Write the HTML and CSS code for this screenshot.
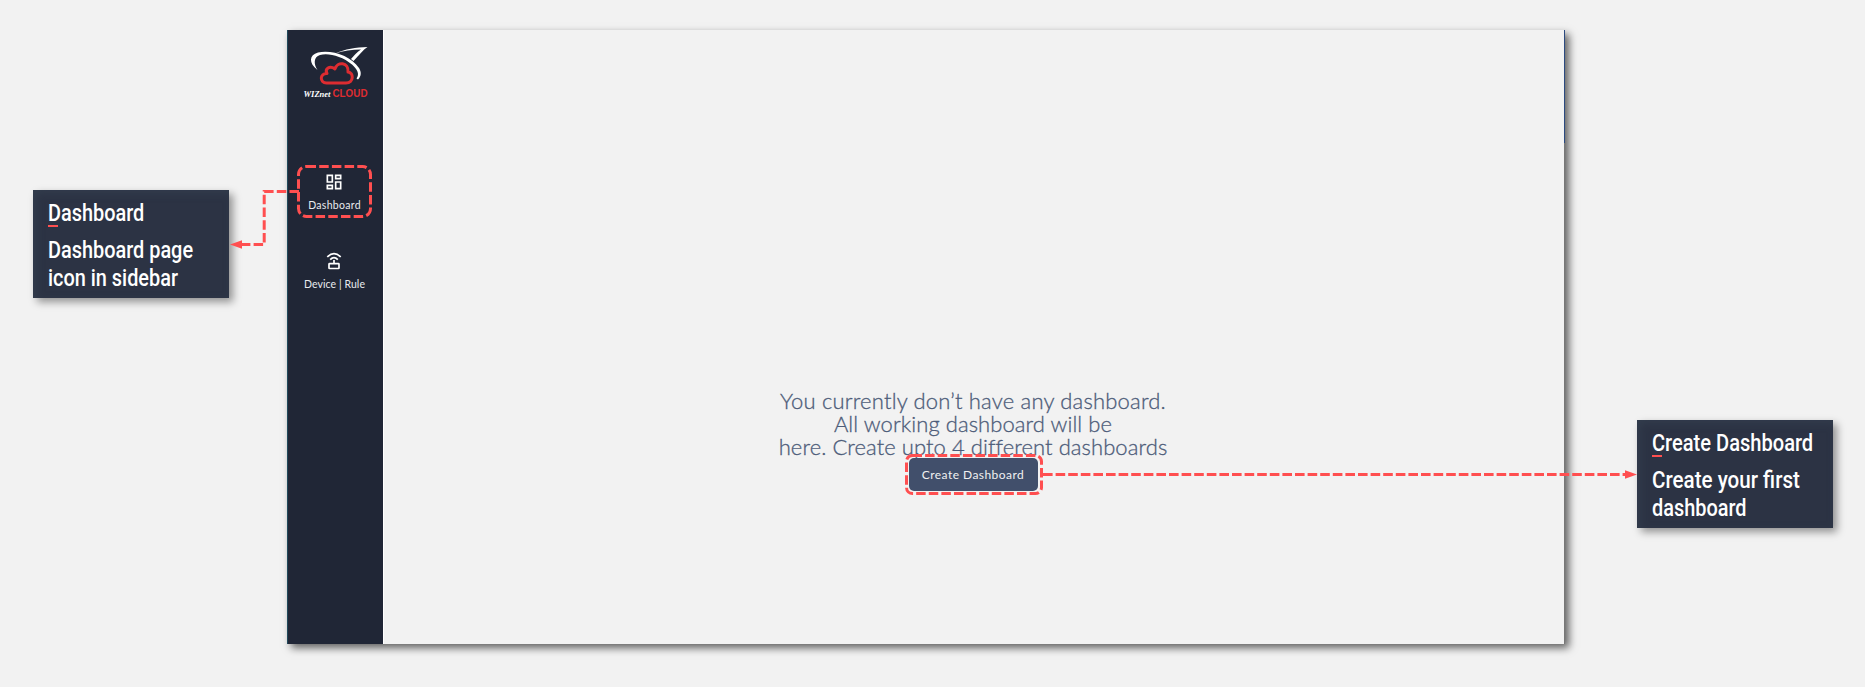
FILE: index.html
```html
<!DOCTYPE html>
<html lang="en">
<head>
<meta charset="utf-8">
<title>WIZnet Cloud dashboard guide</title>
<link rel="stylesheet" href="styles.css">
</head>
<body>
<div class="stage">
  <aside class="note note-left">
    <h2><span class="fit">Dashboard</span></h2>
    <p><span class="fit">Dashboard page</span><span class="fit">icon in sidebar</span></p>
  </aside>
  <div class="app">
    <nav class="sidebar">
      <svg class="logo" viewBox="0 0 72 56" width="72" height="56">
        <path d="M14.500 23C5.500 16 6 8 15 5.500C29 2.500 48 9 56 21C58.500 25 58.500 29 55 32.500L53.500 31.500C57 27 54 22 49 17.500C39 9 25 5.500 17 8C10.500 10 10.500 17 14.500 23Z" fill="#fff"/>
        <path d="M32 6.500C42 2 53 .300 64.500 0C60 3 56 8 50.500 14L48 12C51.500 8 54 5 58 2.500C49 2.500 40 4 32 6.500Z" fill="#fff"/>
        <path d="M23.500 36H43C51 36 51 25.500 45 25C46 15 34 14 32 22C26.500 18 21.500 22 24 26.500C16.500 26 16.500 36 23.500 36Z" fill="none" stroke="#dd2c31" stroke-width="3" stroke-linejoin="round"/>
        <text class="logo-wiz" x="0.500" y="49.700" textLength="27" lengthAdjust="spacingAndGlyphs">WIZnet</text>
        <text class="logo-cloud" x="29.500" y="50.200" textLength="35" lengthAdjust="spacingAndGlyphs">CLOUD</text>
      </svg>
      <a class="item item-active">
        <svg viewBox="0 0 24 24" width="20" height="20"><path fill="#fff" d="M19 5v2h-4V5h4M9 5v6H5V5h4m10 8v6h-4v-6h4M9 17v2H5v-2h4M21 3h-8v6h8V3zM11 3H3v10h8V3zm10 8h-8v10h8V11zm-10 4H3v6h8v-6z"/></svg>
        <span class="label-wide">Dashboard</span>
      </a>
      <a class="item">
        <svg class="device" viewBox="0 0 20 20" width="20" height="20" fill="none" stroke="#fff" stroke-width="1.700"><rect x="5" y="12.700" width="10" height="4.800" rx=".6"/><path d="M10 12.700V9M6.200 8.600Q10 4.800 13.800 8.600M3.300 6Q10-.8 16.700 6"/></svg>
        <span>Device | Rule</span>
      </a>
    </nav>
    <main class="content">
      <p class="empty"><span class="loose">You currently don’t have any dashboard.</span><span>All working dashboard will be</span><span>here. Create upto 4 different dashboards</span></p>
      <button class="create">Create Dashboard</button>
    </main>
  </div>
  <aside class="note note-right">
    <h2><span class="fit fit-title">Create Dashboard</span></h2>
    <p><span class="fit fit-wide">Create your first</span><span class="fit">dashboard</span></p>
  </aside>
  <svg class="callouts" viewBox="0 0 1865 687" width="1865" height="687" fill="none" stroke="#ff4f50" stroke-width="3">
    <rect x="298.500" y="166.500" width="72" height="50" rx="8" stroke-dasharray="9.500 3.200"/>
    <path d="M299 191.500H264.200V244.500H241" stroke-dasharray="9.500 3.200"/>
    <path d="M230 244.500L242 240.300V248.700Z" fill="#ff4f50" stroke="none"/>
    <rect x="906.500" y="455.500" width="135" height="38" rx="6" stroke-dasharray="9.500 3.100"/>
    <path d="M1043 474.500H1626" stroke-dasharray="9.600 3"/>
    <path d="M1637 474.500L1625 470.300V478.700Z" fill="#ff4f50" stroke="none"/>
  </svg>
</div>
</body>
</html>
```
FILE: styles.css
```css
* { box-sizing: border-box; }
body { margin: 0; background: #f2f2f2; }
.stage {
  position: relative;
  width: 1865px;
  height: 687px;
  padding: 30px 32px 0 33px;
  display: flex;
  align-items: flex-start;
  overflow: hidden;
}
.note {
  flex: none;
  width: 196px;
  height: 108px;
  padding: 10px 15px 8px;
  color: #fff;
  background: #2c3344;
  box-shadow: 4px 4px 8px rgba(0, 0, 0, .4), inset 3px 3px 8px rgba(60, 76, 90, .4);
  font: 500 23px/28px Roboto, sans-serif;
}
.note-left { margin: 160px 58px 0 0; }
.note-right { margin: 390px 0 0 72px; }
.note h2 { margin: 0; height: 37px; font: inherit; }
.note h2::after {
  content: "";
  display: block;
  width: 10px;
  height: 2px;
  margin-top: -3px;
  background: #ff4f50;
}
.note p { margin: 0; }
.fit {
  display: block;
  width: max-content;
  white-space: nowrap;
  transform-origin: 0 50%;
  transform: scaleX(.865);
}
.fit-title { transform: scaleX(.873); }
.fit-wide { transform: scaleX(.895); }
.app {
  flex: none;
  display: flex;
  width: 1278px;
  height: 614px;
  background: #f2f2f2;
  border-style: solid;
  border-width: 0 1px 0 0;
  border-image: linear-gradient(#2b4a80 114px, #777 114px) 1;
  box-shadow: 4px 4px 8px 0 rgba(0, 0, 0, .6);
}
.sidebar {
  width: 96px;
  padding: 17px 2px 0 0;
  display: flex;
  flex-direction: column;
  align-items: center;
  color: #e9ebef;
  background: #202636;
  border-left: 1px solid #20495b;
}
.logo { display: block; margin-left: 8px; overflow: visible; }
.logo-wiz { font: italic bold 9px "Liberation Serif", serif; fill: #fff; }
.logo-cloud { font: bold 11.500px "Liberation Sans", sans-serif; fill: #dd2c31; }
.item {
  display: flex;
  flex-direction: column;
  align-items: center;
  height: 79px;
  gap: 6px;
  font: 10.500px/14px Lato, sans-serif;
  letter-spacing: .08px;
  white-space: nowrap;
}
.device { margin-right: 2px; }
.label-wide { letter-spacing: .3px; }
.item-active { margin-top: 69px; }
.content {
  flex: 1;
  padding-right: 2px;
  display: flex;
  flex-direction: column;
  align-items: center;
  border-left: 1px solid #fff;
}
.empty {
  margin: 359px 0 0;
  display: flex;
  flex-direction: column;
  align-items: center;
  color: #4d5c79;
  font: 300 22px/23px Lato, sans-serif;
  letter-spacing: .07px;
  -webkit-text-stroke: .3px #4d5c79;
  white-space: nowrap;
}
.loose { letter-spacing: .19px; }
.create {
  width: 129px;
  height: 33px;
  margin: 0;
  padding: 0;
  border: 0;
  border-radius: 5px;
  background: #414f6b;
  color: #f1f1f1;
  font: 12px/33px Lato, sans-serif;
  letter-spacing: .45px;
  white-space: nowrap;
}
.callouts { position: absolute; left: 0; top: 0; }
```
